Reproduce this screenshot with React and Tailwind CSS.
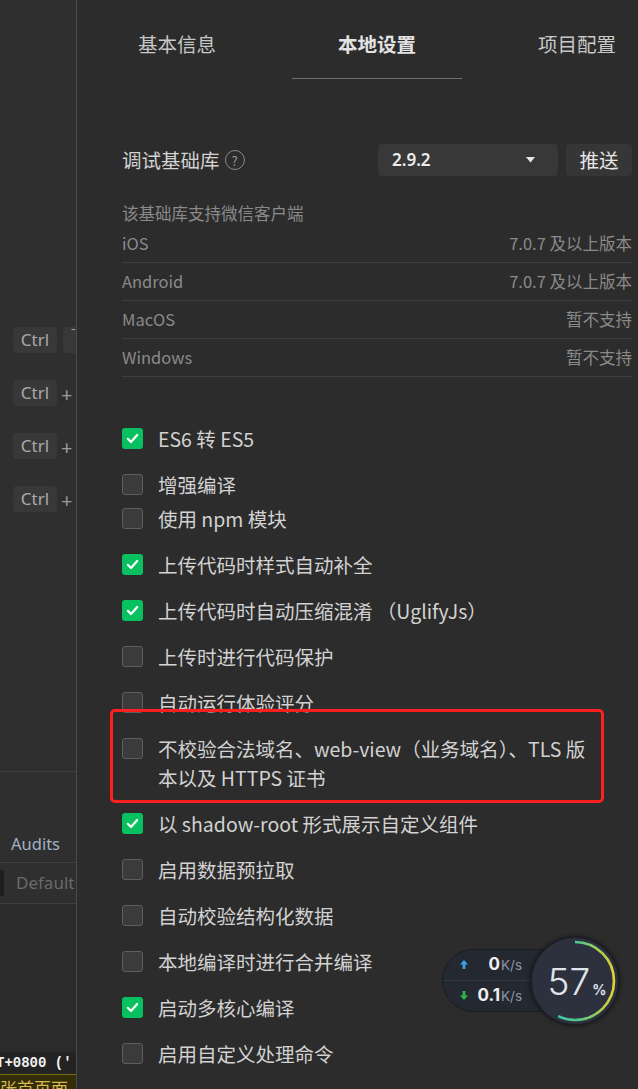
import React from 'react'

const items = [
  { label: 'ES6 转 ES5', on: true, first: true },
  { label: '增强编译', on: false },
  { label: '使用 npm 模块', on: false, tight: true },
  { label: '上传代码时样式自动补全', on: true },
  { label: '上传代码时自动压缩混淆 （UglifyJs）', on: true },
  { label: '上传时进行代码保护', on: false },
  { label: '自动运行体验评分', on: false },
  { label: ['不校验合法域名、web-view（业务域名）、TLS 版', '本以及 HTTPS 证书'], on: false },
  { label: '以 shadow-root 形式展示自定义组件', on: true },
  { label: '启用数据预拉取', on: false },
  { label: '自动校验结构化数据', on: false },
  { label: '本地编译时进行合并编译', on: false },
  { label: '启动多核心编译', on: true },
  { label: '启用自定义处理命令', on: false },
]

const support = [
  ['iOS', '7.0.7 及以上版本'],
  ['Android', '7.0.7 及以上版本'],
  ['MacOS', '暂不支持'],
  ['Windows', '暂不支持'],
]

function Box({ on }) {
  if (on) {
    return (
      <span className="mt-[4px] flex h-[21px] w-[21px] shrink-0 items-center justify-center rounded-[3px] bg-[#07c160]">
        <svg width="15" height="15" viewBox="0 0 15 15">
          <path d="M2.8 7.8l3.2 3.2 6.2-7" fill="none" stroke="#fff" strokeWidth="2.2" strokeLinecap="round" strokeLinejoin="round" />
        </svg>
      </span>
    )
  }
  return <span className="mt-[4px] h-[21px] w-[21px] shrink-0 rounded-[3px] border border-[#5e5e5e] bg-[#3b3b3b]" />
}

function Key({ children }) {
  return (
    <span className="flex h-[26px] w-[44px] shrink-0 items-center justify-center rounded-[4px] bg-[#383838] text-[17px] text-[#a9a9a9]">
      {children}
    </span>
  )
}

function LeftPane() {
  return (
    <div className="flex w-[77px] shrink-0 flex-col overflow-hidden border-r border-[#4a4a4a] bg-[#2f2f2f] font-['Noto_Sans','Liberation_Sans',sans-serif]">
      <div className="h-[772px] shrink-0 border-b border-[#3e3e3e] pt-[327px] pl-[13px]">
        <div className="flex flex-col gap-[27px]">
          <div className="flex gap-[6px]">
            <Key>Ctrl</Key>
            <span className="flex h-[26px] w-[40px] shrink-0 items-start rounded-[4px] bg-[#383838] pl-[8px] text-[12px] leading-[14px] text-[#a9a9a9]">ˉ</span>
          </div>
          {[0, 1, 2].map((i) => (
            <div key={i} className="flex items-center gap-[4px]">
              <Key>Ctrl</Key>
              <span className="mt-[4px] text-[20px] leading-none text-[#9a9a9a]">+</span>
            </div>
          ))}
        </div>
      </div>
      <div className="flex h-[91px] shrink-0 items-end border-b border-[#3e3e3e]">
        <span className="pl-[11px] text-[16.5px] leading-[36px] text-[#a3b2c4]">Audits</span>
      </div>
      <div className="flex h-[41px] shrink-0 items-center border-b border-[#3e3e3e]">
        <span className="h-[26px] w-[4px] bg-[#1e1e1e]" />
        <span className="pl-[12px] text-[17px] text-[#6a6a6a]">Default</span>
      </div>
      <div className="h-[148px] shrink-0 bg-[#2b2b2b]" />
      <div className="h-[22px] shrink-0 overflow-hidden whitespace-nowrap bg-[#232323] font-['Liberation_Mono',monospace] text-[14px] font-bold leading-[22px] text-[#f2f2f2]">
        <span className="ml-[-4px]">T+0800 ('</span>
      </div>
      <div className="flex-1 overflow-hidden whitespace-nowrap border-t border-[#7a6a10] bg-[#332d08] font-['Noto_Sans_CJK_SC',sans-serif] text-[17px] leading-[26px] text-[#d8b850]">
        张首页面
      </div>
    </div>
  )
}

function Widget() {
  return (
    <div className="absolute left-[365px] top-[936px] h-[90px] w-[180px]">
      <div className="absolute left-0 top-[13px] flex h-[63px] w-[130px] flex-col rounded-full border border-[#1a1c22] bg-[#242831] font-['Inter',sans-serif]">
        <div className="flex h-[31px] items-center border-b border-[#343944] pl-[16px]">
          <svg width="10" height="11" viewBox="0 0 10 11">
            <path d="M5 1L1 5.5h2.6V10h2.8V5.5H9z" fill="#3aa3ea" />
          </svg>
          <span className="ml-[6px] w-[25px] text-right text-[17px] font-bold text-[#eef0f3]">0</span>
          <span className="ml-[1px] text-[13.5px] text-[#8f96a3]">K/s</span>
        </div>
        <div className="flex h-[31px] items-center pl-[16px]">
          <svg width="10" height="11" viewBox="0 0 10 11">
            <path d="M5 10L1 5.5h2.6V1h2.8v4.5H9z" fill="#2cb54e" />
          </svg>
          <span className="ml-[6px] w-[25px] text-right text-[17px] font-bold text-[#eef0f3]">0.1</span>
          <span className="ml-[1px] text-[13.5px] text-[#8f96a3]">K/s</span>
        </div>
      </div>
      <div className="absolute left-[88px] top-0 flex h-[90px] w-[90px] items-center justify-center rounded-full border-2 border-[#1c1f26] bg-[#2c313d] shadow-[0_0_4px_rgba(0,0,0,0.5)]">
        <svg className="absolute left-[-2px] top-[-2px]" width="90" height="90" viewBox="0 0 90 90">
          <defs>
            <linearGradient id="arc" x1="0" y1="0" x2="0" y2="1">
              <stop offset="0" stopColor="#2ec4c0" />
              <stop offset="0.55" stopColor="#52c98a" />
              <stop offset="1" stopColor="#e0d232" />
            </linearGradient>
          </defs>
          <circle cx="45" cy="45" r="39" fill="none" stroke="url(#arc)" strokeWidth="2.6" strokeDasharray="139.7 300" transform="rotate(-90 45 45)" />
        </svg>
        <span className="ml-[4px] font-['Inter',sans-serif] text-[37px] font-light leading-none text-[#dfe3ea]">57</span>
        <span className="mt-[16px] ml-[2px] font-['Inter',sans-serif] text-[14px] font-bold text-[#dfe3ea]">%</span>
      </div>
    </div>
  )
}

export default function App() {
  return (
    <div className="flex h-[1089px] w-[638px] overflow-hidden bg-[#2c2c2c]">
      <LeftPane />
      <div className="relative min-w-0 flex-1 font-['Noto_Sans_CJK_SC','Liberation_Sans',sans-serif]">
        <div className="flex h-[80px] whitespace-nowrap">
          {['基本信息', '本地设置', '项目配置'].map((t, i) => (
            <div key={t} className="flex w-[200px] shrink-0 flex-col items-center">
              <span className={'mt-[29px] h-[30px] text-[19.5px] leading-[30px] ' + (i === 1 ? 'font-bold text-[#e2e2e2]' : 'text-[#c8c8c8]')}>
                {t}
              </span>
              {i === 1 && <span className="mt-[19px] h-px w-[170px] bg-[#6e6e6e]" />}
            </div>
          ))}
        </div>

        <div className="pl-[45px] pr-[6px]">
          <div className="mt-[64px] flex h-[32px] items-center">
            <span className="text-[19.5px] text-[#d2d2d2]">调试基础库</span>
            <span className="ml-[5px] flex h-[20px] w-[20px] items-center justify-center rounded-full border-[1.5px] border-[#8a8a8a] text-[13px] leading-none text-[#9a9a9a]">?</span>
            <div className="ml-auto flex h-[32px] w-[180px] items-center rounded-[4px] bg-[#383838] pl-[14px] pr-[23px]">
              <span className="font-['Noto_Sans',sans-serif] text-[17px] font-semibold text-[#ececec]">2.9.2</span>
              <svg className="ml-auto" width="9" height="6" viewBox="0 0 9 6">
                <path d="M0 0h9L4.5 5.5z" fill="#e6e6e6" />
              </svg>
            </div>
            <div className="ml-[8px] flex h-[32px] w-[66px] items-center justify-center rounded-[4px] bg-[#363636] text-[19.5px] text-[#e6e6e6]">
              推送
            </div>
          </div>

          <div className="mt-[25px] text-[16.5px] leading-[24px] text-[#8a8a8a]">该基础库支持微信客户端</div>
          {support.map(([k, v]) => (
            <div key={k} className="flex h-[38px] items-center justify-between border-b border-[#3e3e3e] text-[16.5px] text-[#8a8a8a]">
              <span>{k}</span>
              <span>{v}</span>
            </div>
          ))}

          <div className="mt-[47px]">
            {items.map((it, i) => (
              <div
                key={i}
                className={'flex items-start gap-[15px] ' + (it.first ? '' : it.tight ? 'mt-[5px]' : 'mt-[17px]')}
              >
                <Box on={it.on} />
                <span className="text-[19.5px] leading-[29px] whitespace-nowrap text-[#d2d2d2]">
                  {Array.isArray(it.label) ? (
                    <>
                      {it.label[0]}
                      <br />
                      {it.label[1]}
                    </>
                  ) : (
                    it.label
                  )}
                </span>
              </div>
            ))}
          </div>
        </div>

        <div className="absolute left-[33px] top-[709px] h-[94px] w-[494px] rounded-[5px] border-[3px] border-[#ff1f1f]" />
        <Widget />
      </div>
    </div>
  )
}
